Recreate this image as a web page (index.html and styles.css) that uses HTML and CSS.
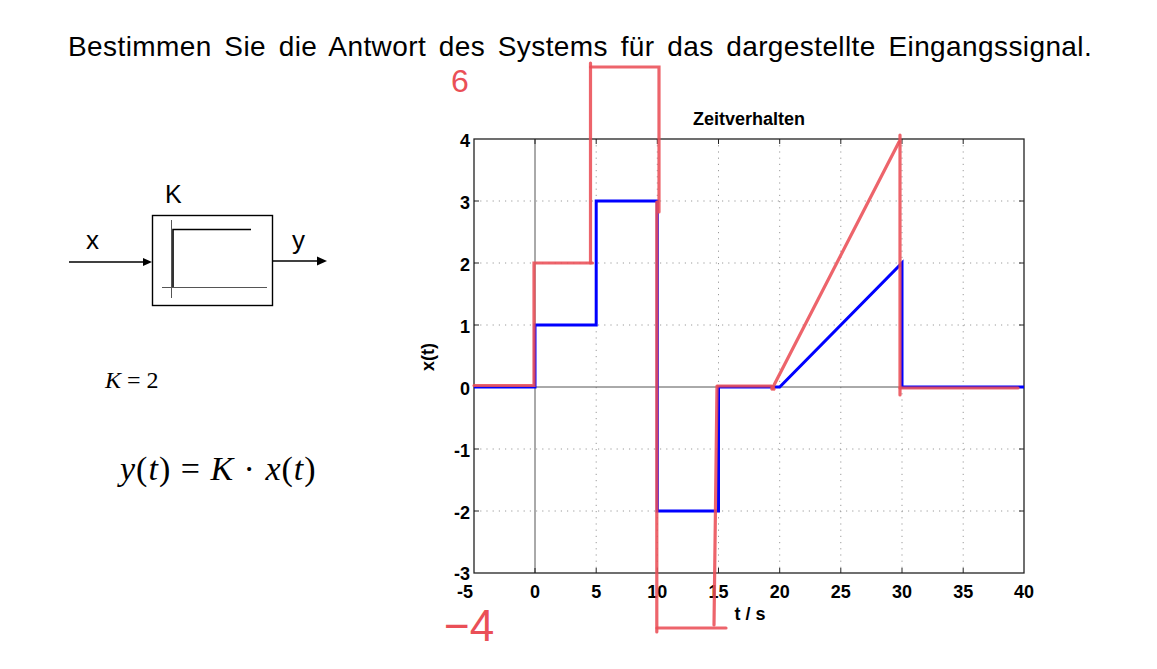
FILE: index.html
```html
<!DOCTYPE html>
<html lang="de">
<head>
<meta charset="utf-8">
<title>Systemantwort</title>
<link rel="stylesheet" href="styles.css">
</head>
<body>
<h1 class="task">Bestimmen Sie die Antwort des Systems für das dargestellte Eingangssignal.</h1>
<div class="content">
  <div class="left">
    <svg class="block" width="400" height="280" viewBox="0 60 400 280">
      <text class="blk-label" x="165" y="203">K</text>
      <text class="blk-sig" x="86" y="249">x</text>
      <text class="blk-sig" x="292" y="249">y</text>
      <line class="blk-line" x1="69" y1="262" x2="145" y2="262"/>
      <polygon class="blk-head" points="152,262 143,258 143,266"/>
      <rect class="blk-box" x="152.5" y="215.5" width="120" height="90"/>
      <line class="blk-line" x1="272" y1="261" x2="319" y2="261"/>
      <polygon class="blk-head" points="327,261 317,256.5 317,265.5"/>
      <line class="blk-axis" x1="171.5" y1="220" x2="171.5" y2="298"/>
      <line class="blk-axis" x1="162" y1="287.5" x2="267" y2="287.5"/>
      <polyline class="blk-step" points="173,287 173,229.5 251,229.5"/>
    </svg>
    <p class="eq-k"><i>K</i> = 2</p>
    <p class="eq-y"><i>y</i>(<i>t</i>) = <i>K</i> · <i>x</i>(<i>t</i>)</p>
  </div>
  <svg class="plot" width="757" height="609" viewBox="400 60 757 609">
    <g class="grid">
      <line x1="596.2" y1="139" x2="596.2" y2="573"/>
      <line x1="657.3" y1="139" x2="657.3" y2="573"/>
      <line x1="718.5" y1="139" x2="718.5" y2="573"/>
      <line x1="779.7" y1="139" x2="779.7" y2="573"/>
      <line x1="840.8" y1="139" x2="840.8" y2="573"/>
      <line x1="902" y1="139" x2="902" y2="573"/>
      <line x1="963.2" y1="139" x2="963.2" y2="573"/>
      <line x1="474" y1="201" x2="1024" y2="201"/>
      <line x1="474" y1="263" x2="1024" y2="263"/>
      <line x1="474" y1="325" x2="1024" y2="325"/>
      <line x1="474" y1="449" x2="1024" y2="449"/>
      <line x1="474" y1="511" x2="1024" y2="511"/>
    </g>
    <g class="zero">
      <line x1="535" y1="139" x2="535" y2="573"/>
      <line x1="474" y1="387" x2="1024" y2="387"/>
    </g>
    <g class="ticks">
      <path d="M535,573v-5M596.2,573v-5M657.3,573v-5M718.5,573v-5M779.7,573v-5M840.8,573v-5M902,573v-5M963.2,573v-5"/>
      <path d="M535,139v5M596.2,139v5M657.3,139v5M718.5,139v5M779.7,139v5M840.8,139v5M902,139v5M963.2,139v5"/>
      <path d="M474,201h5M474,263h5M474,325h5M474,387h5M474,449h5M474,511h5"/>
      <path d="M1024,201h-5M1024,263h-5M1024,325h-5M1024,387h-5M1024,449h-5M1024,511h-5"/>
    </g>
    <rect class="frame" x="474" y="139" width="550" height="434"/>
    <text class="ptitle" x="749" y="125">Zeitverhalten</text>
    <g class="ylab">
      <text x="470" y="147">4</text>
      <text x="470" y="209">3</text>
      <text x="470" y="271">2</text>
      <text x="470" y="333">1</text>
      <text x="470" y="395">0</text>
      <text x="470" y="457">-1</text>
      <text x="470" y="519">-2</text>
      <text x="470" y="580">-3</text>
    </g>
    <g class="xlab">
      <text x="465" y="598">-5</text>
      <text x="535" y="598">0</text>
      <text x="596.2" y="598">5</text>
      <text x="657.3" y="598">10</text>
      <text x="718.5" y="598">15</text>
      <text x="779.7" y="598">20</text>
      <text x="840.8" y="598">25</text>
      <text x="902" y="598">30</text>
      <text x="963.2" y="598">35</text>
      <text x="1024" y="598">40</text>
    </g>
    <text class="axname" x="750" y="620">t / s</text>
    <text class="axname" transform="translate(434 357) rotate(-90)">x(t)</text>
    <path class="blue" d="M474,387H535V325H596.2V201H657.3V511H718.5V387H779.7L902,263V387H1024"/>
    <g class="red">
      <path d="M474,385.5H534V263H592.5"/>
      <path d="M590.5,263V63"/>
      <path d="M590.5,67H659V212"/>
      <path d="M656.8,202V632"/>
      <path d="M657,628H726"/>
      <path d="M717,386L714,625"/>
      <path d="M718,386H771L774,389"/>
      <path d="M772,389L899,142"/>
      <path d="M900,135V395"/>
      <path d="M900,388H1018"/>
    </g>
    <text class="hand" x="451" y="92">6</text>
    <text class="hand hand-big" x="444" y="641">−4</text>
  </svg>
</div>
</body>
</html>
```

FILE: styles.css
```css
html, body {
  margin: 0;
  padding: 0;
  background: #ffffff;
}

body {
  width: 1157px;
  height: 669px;
  overflow: hidden;
  font-family: "Liberation Sans", Arial, sans-serif;
  color: #000;
}

.task {
  margin: 0;
  padding: 34px 0 0 68px;
  height: 26px;
  font-size: 28px;
  line-height: 26px;
  font-weight: normal;
  white-space: nowrap;
  letter-spacing: 0.4px;
  word-spacing: 4.5px;
}

.content {
  display: flex;
  height: 609px;
}

.left {
  width: 400px;
  flex: none;
}

.block {
  display: block;
}

.blk-label {
  font-family: "Liberation Sans", Arial, sans-serif;
  font-size: 25px;
}

.blk-sig {
  font-family: "Liberation Sans", Arial, sans-serif;
  font-size: 26px;
}

.blk-line {
  stroke: #000;
  stroke-width: 1.4;
}

.blk-head {
  fill: #000;
}

.blk-box {
  fill: none;
  stroke: #000;
  stroke-width: 1.4;
}

.blk-axis {
  stroke: #555;
  stroke-width: 1;
}

.blk-step {
  fill: none;
  stroke: #000;
  stroke-width: 1.6;
}

.eq-k {
  margin: 28px 0 0 105px;
  font-family: "Liberation Serif", "Times New Roman", serif;
  font-size: 24px;
  line-height: 24px;
}

.eq-y {
  margin: 57px 0 0 120px;
  font-family: "Liberation Serif", "Times New Roman", serif;
  font-size: 34px;
  line-height: 40px;
  letter-spacing: 1px;
}

.plot {
  display: block;
  flex: none;
}

.grid line {
  stroke: #9a9a9a;
  stroke-width: 1;
  stroke-dasharray: 1.2 5;
}

.zero line {
  stroke: #555;
  stroke-width: 1;
}

.ticks path {
  stroke: #222;
  stroke-width: 1;
  fill: none;
}

.frame {
  fill: none;
  stroke: #222;
  stroke-width: 1.3;
}

.ptitle {
  font-family: "Liberation Sans", Arial, sans-serif;
  font-size: 18px;
  font-weight: bold;
  text-anchor: middle;
}

.ylab text {
  font-family: "Liberation Sans", Arial, sans-serif;
  font-size: 18px;
  font-weight: bold;
  text-anchor: end;
}

.xlab text {
  font-family: "Liberation Sans", Arial, sans-serif;
  font-size: 18px;
  font-weight: bold;
  text-anchor: middle;
}

.axname {
  font-family: "Liberation Sans", Arial, sans-serif;
  font-size: 18px;
  font-weight: bold;
  text-anchor: middle;
}

.blue {
  fill: none;
  stroke: #0000ff;
  stroke-width: 3;
}

.red path {
  fill: none;
  stroke: #ea4f57;
  stroke-opacity: 0.88;
  stroke-width: 3.2;
  stroke-linecap: round;
}

.hand {
  font-family: "Liberation Sans", Arial, sans-serif;
  font-size: 32px;
  fill: #ea4f57;
}

.hand-big {
  font-size: 44px;
}
```
